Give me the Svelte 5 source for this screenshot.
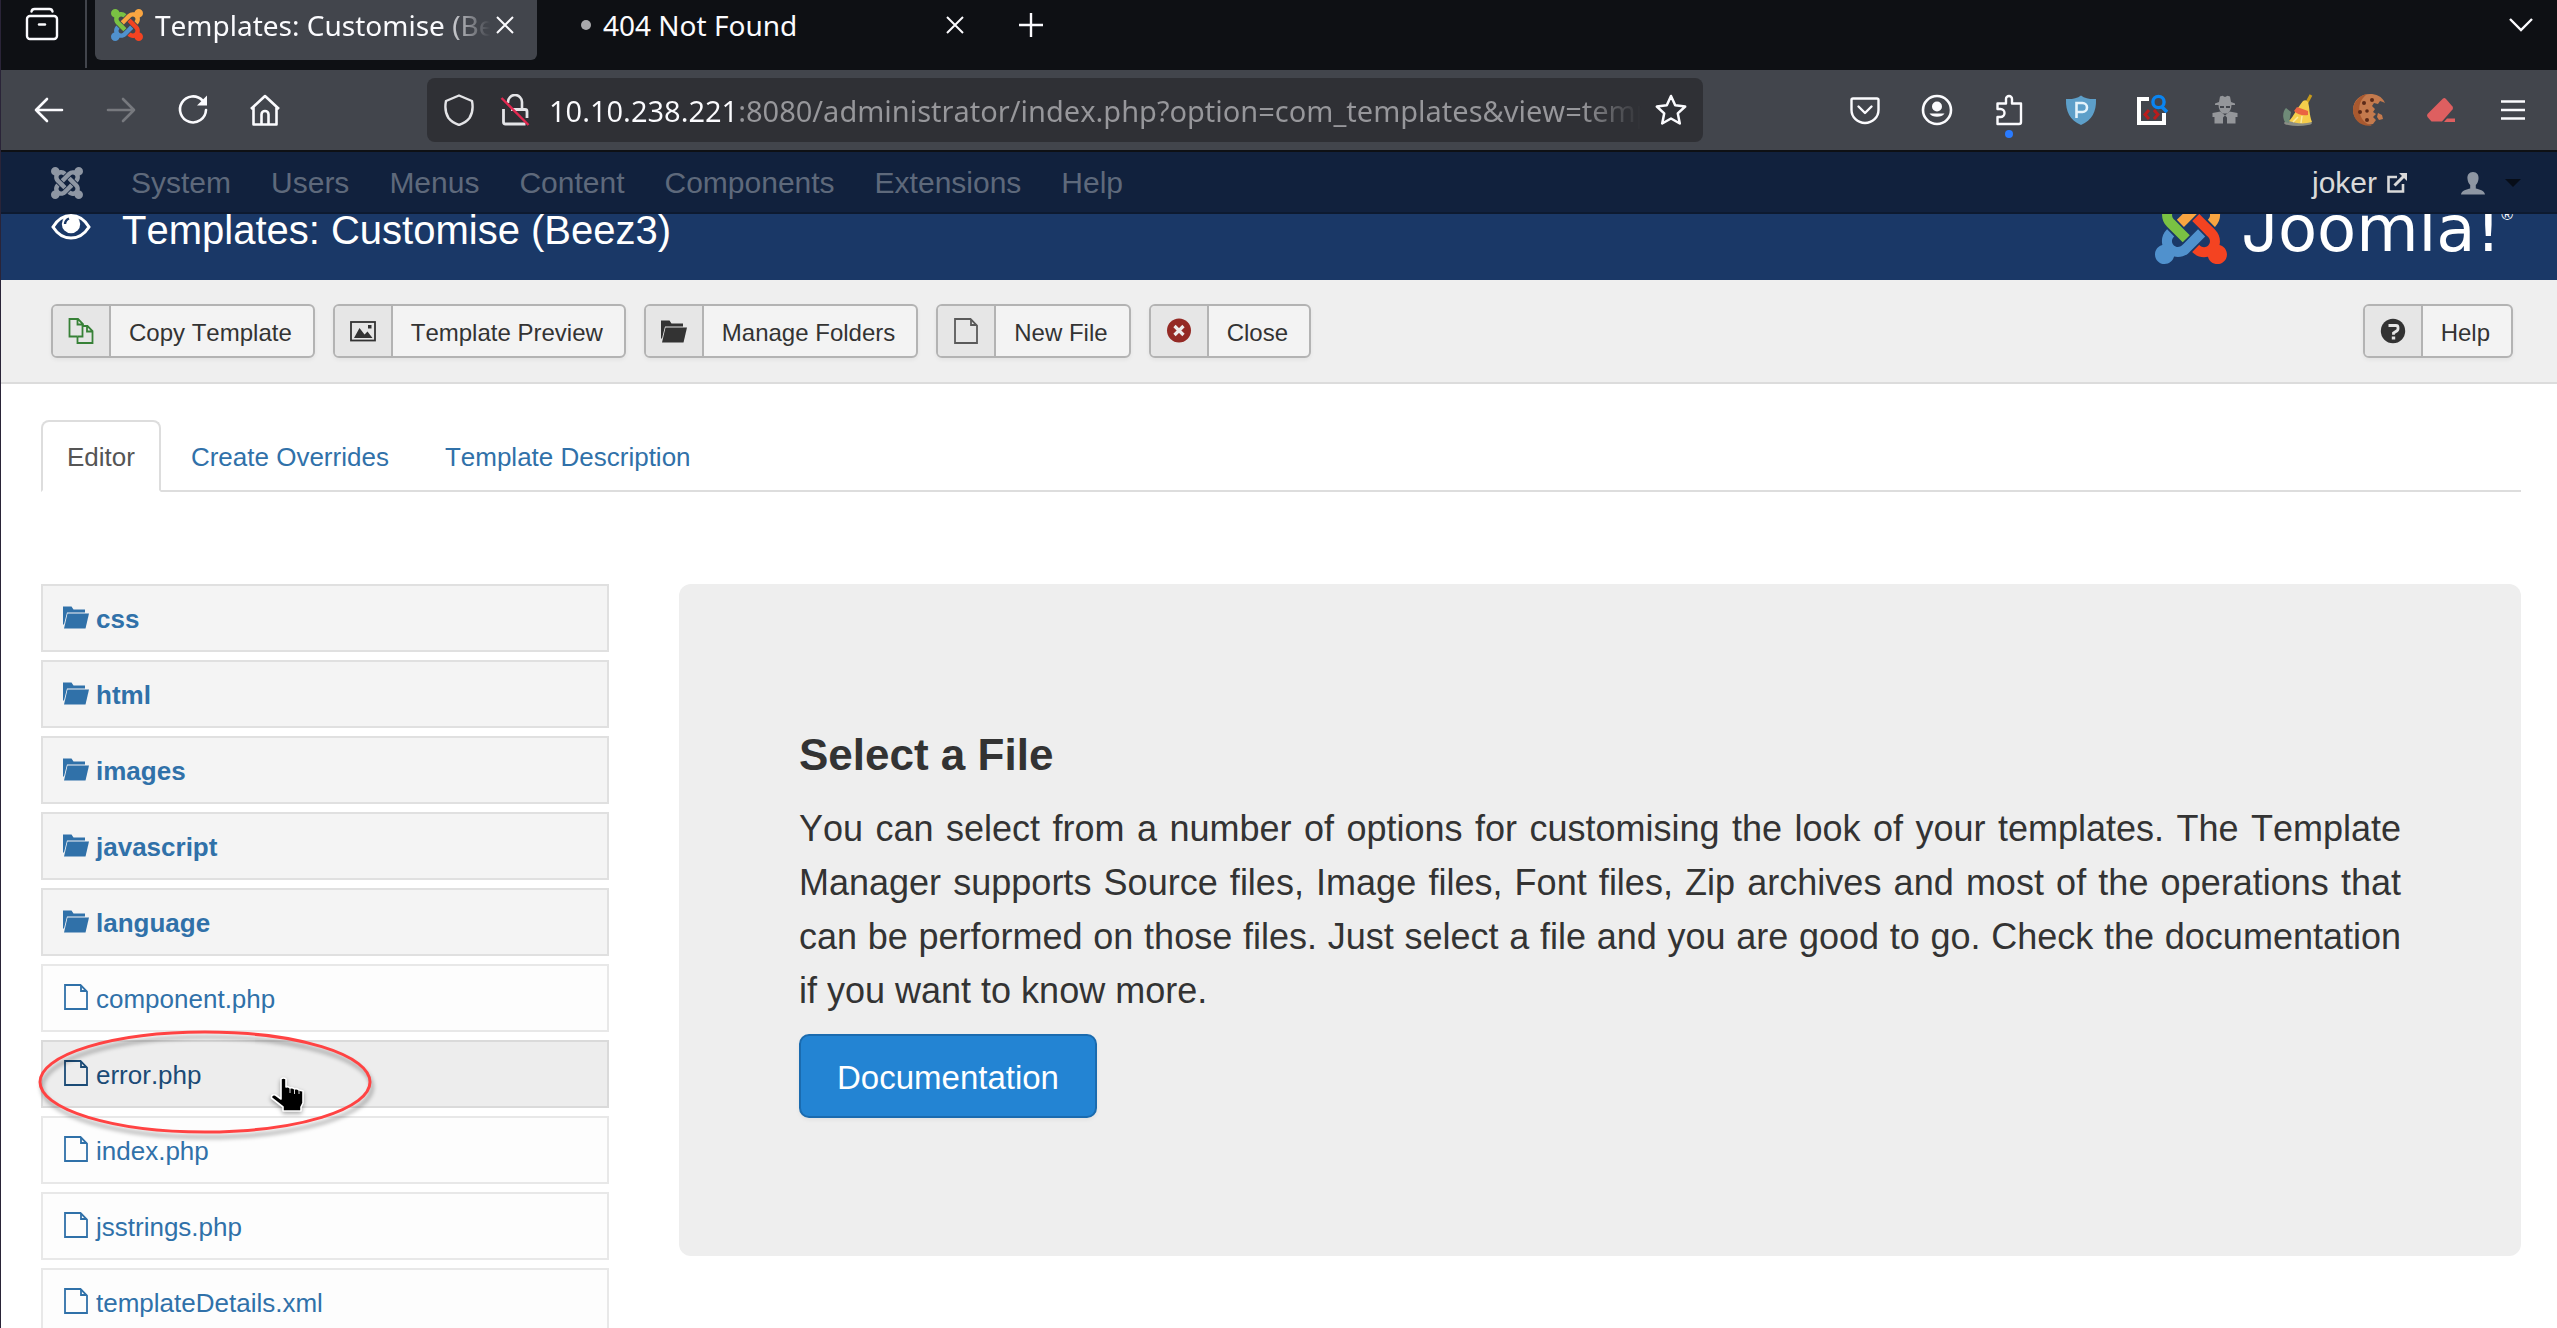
<script>
  const menus = ['System', 'Users', 'Menus', 'Content', 'Components', 'Extensions', 'Help'];
  const actions = [
    { icon: 'copy', label: 'Copy Template' },
    { icon: 'image', label: 'Template Preview' },
    { icon: 'folder', label: 'Manage Folders' },
    { icon: 'newfile', label: 'New File' },
    { icon: 'cancel', label: 'Close' }
  ];
  const tabs = ['Editor', 'Create Overrides', 'Template Description'];
  const folders = ['css', 'html', 'images', 'javascript', 'language'];
  const files = ['component.php', 'error.php', 'index.php', 'jsstrings.php', 'templateDetails.xml'];
  const extensions = ['pocket', 'account', 'puzzle', 'pshield', 'inspect', 'spy', 'broom', 'cookie', 'eraser', 'menu'];
  let activeTab = $state('Editor');
  let address = $state('10.10.238.221:8080/administrator/index.php?option=com_templates&view=template&id=503');

  const ribbon =
    'M16.719 14.759L14.22 17.26l-2.37 2.37-.462.466c-1.368 1.365-3.297 1.83-5.047 1.397-.327 1.424-1.604 2.49-3.13 2.49C1.438 23.983 0 22.547 0 20.772c0-1.518 1.055-2.789 2.469-3.123-.446-1.76.016-3.705 1.396-5.08l.179-.18 2.37 2.37-.184.181c-.769.779-.769 2.024 0 2.789.771.78 2.022.78 2.787.015l.465-.465 2.367-2.371 2.502-2.506 2.368 2.357z';
</script>

{#snippet joomla(colours)}
  {#each colours as colour, i}
    <path d={ribbon} fill={colour} transform={`rotate(${-90 * i} 12 12)`} />
  {/each}
{/snippet}

{#snippet icon(name)}
  {#if name === 'pocket'}
    <svg class="i32" viewBox="0 0 32 32" fill="none" stroke="#fbfbfe" stroke-width="2.4" stroke-linecap="round" stroke-linejoin="round"><path d="M4 4.500h24a1.500 1.500 0 0 1 1.500 1.500v10a13.500 13 0 0 1-27 0V6A1.500 1.500 0 0 1 4 4.500z" /><path d="M9.500 12.500l6.500 6.500 6.500-6.500" /></svg>
  {:else if name === 'account'}
    <svg class="i32" viewBox="0 0 32 32"><circle cx="16" cy="16" r="14" fill="none" stroke="#fbfbfe" stroke-width="2.6" /><circle cx="16" cy="12.500" r="5" fill="#fbfbfe" /><path d="M8.500 19.500h15a8.500 6 0 0 1-15 0z" fill="#fbfbfe" /></svg>
  {:else if name === 'puzzle'}
    <svg class="i32" viewBox="0 0 32 32" fill="none" stroke="#fbfbfe" stroke-width="2.4" stroke-linejoin="round"><path d="M4.500 30V23h3a3.800 3.800 0 0 0 0-8h-3V9.500h8.500V5a3 3 0 0 1 6 0v4.500h9V28a2 2 0 0 1-2 2z" /></svg>
  {:else if name === 'pshield'}
    <svg class="i32" viewBox="0 0 32 32"><path d="M16 1.500c4 3 10 4 15 3.500.5 13-4 21-15 26C5 26 .5 18 1 5c5 .5 11-.5 15-3.500z" fill="#5d9fc9" /><path d="M11.500 24V9h6a4.500 4.500 0 0 1 0 9h-6" fill="none" stroke="#e4f3fb" stroke-width="2.6" /></svg>
  {:else if name === 'inspect'}
    <svg class="i34" viewBox="0 0 34 32" fill="none"><path d="M13 5H3v24h25V19" stroke="#fff" stroke-width="4" /><circle cx="22.500" cy="8" r="5.600" stroke="#0a84f0" stroke-width="3.400" /><path d="M26 13l5 5" stroke="#0a84f0" stroke-width="3.600" /><path d="M13 16l-4 4.500 4 4.500M18 16l4 4.500-4 4.500" stroke="#b91c1c" stroke-width="3" /></svg>
  {:else if name === 'spy'}
    <svg class="i32" viewBox="0 0 32 32" fill="#94969a"><path d="M11 2.500l2.500-.8L16 3l2.500-1.300 2.500.8 1 5.500 4 1.500v1.500h-3.500c0 4-2 7-4 8.500h-5c-2-1.500-4-4.500-4-8.500H6V9.500L10 8z" /><path d="M3.500 19l8-1.500 4.500 4 4.500-4 8 1.500v4h-2v6.500H18V23.500l-2-2-2 2v6H5.500V23h-2z" /><path d="M11 12h4v2h-4zM17 12h4v2h-4z" fill="#42454c" /></svg>
  {:else if name === 'broom'}
    <svg class="i32" viewBox="0 0 32 32"><ellipse cx="17" cy="29" rx="14" ry="3" fill="#8b8d84" /><path d="M4 28c-3-5-2-11 1-14l5 4-2 11z" fill="#6f8b78" /><path d="M30 1l-6 11" stroke="#c79a1c" stroke-width="3" /><path d="M22 7q3-2 5 1c2 7 1 12 4 20-7 2-15 2-23-1 5-5 8-13 14-20z" fill="#f5cd4b" /><path d="M12 28l5-5m3 6l1-7" stroke="#fbe9a0" stroke-width="1.500" fill="none" /><path d="M16 13l11 4v4c-5 1-10 0-14-4z" fill="#ea6442" /></svg>
  {:else if name === 'cookie'}
    <svg class="i34" viewBox="0 0 34 32"><path d="M31 8l-3-1-2 3-4-1-2 3 3 3-2 3 3 2-3 3 3 3-3 4C11 33 1 26 1 16S9 0 18 0c6 0 12 2 15 9z" fill="#c47a4d" /><path d="M1 16C1 8 8 1 15 0 8 6 6 12 8 20c2 7 6 10 12 11.500C9 33 1 26 1 16z" fill="#a9592f" /><circle cx="12" cy="9" r="2" fill="#5b2a18" /><circle cx="20" cy="6" r="2" fill="#5b2a18" /><circle cx="8" cy="18" r="2" fill="#5b2a18" /><circle cx="15" cy="17" r="1.800" fill="#5b2a18" /><circle cx="15" cy="26" r="2" fill="#5b2a18" /><path d="M26 19l4 2 1 4-4 1-2-3z" fill="#c47a4d" /></svg>
  {:else if name === 'eraser'}
    <svg class="i32" viewBox="0 0 32 32"><path d="M18 4.500q1.500-1 3 .5l6.500 7.500q1 1.500 0 3L17 27.500H6.500L2.500 23q-1-1.500 0-3z" fill="#de5f60" /><path d="M22 24.500h8v3.500H19z" fill="#de5f60" /></svg>
  {:else if name === 'menu'}
    <svg class="i32" viewBox="0 0 32 32" stroke="#fbfbfe" stroke-width="2.400"><path d="M4 7.500h24M4 16h24M4 24.500h24" /></svg>
  {:else if name === 'copy'}
    <svg class="i26" viewBox="0 0 26 26" fill="none" stroke="#378137" stroke-width="1.800"><path d="M9.500 18.500H1.500V1h8.500l5 5v2.500M9.500 1.500v5h5" /><path d="M9.500 18.500V25H24.500V13l-5-5H14.500v10.500h-5M19 8.500v5h5" /></svg>
  {:else if name === 'image'}
    <svg class="i26" viewBox="0 0 26 26"><rect x="1" y="4" width="24" height="18.500" fill="none" stroke="#333" stroke-width="1.800" /><path d="M4 20l5.500-10 5 6.500 3-3 5 6.500zM18 7h3.500v3.500H18z" fill="#333" /></svg>
  {:else if name === 'folder'}
    <svg class="i26" viewBox="0 0 26 26" fill="currentColor"><path d="M0 2.500h8.500l2 3H22v3H4L1 20.500H0z" /><path d="M4.500 9.500H26l-3.500 15H1z" /></svg>
  {:else if name === 'file' || name === 'newfile'}
    <svg class="i26" viewBox="0 0 26 26" fill="none" stroke={name === 'file' ? 'currentColor' : '#5a5a5a'} stroke-width="1.800"><path d="M2 1h15.500L24 7.500V25H2z" /><path d="M18 1.500v5.500h5.500" /></svg>
  {:else if name === 'cancel'}
    <svg class="i26" viewBox="0 0 26 26"><circle cx="13" cy="12.500" r="12" fill="#942a25" /><path d="M8.500 8l9 9m0-9l-9 9" stroke="#ececec" stroke-width="3.200" /></svg>
  {:else if name === 'question'}
    <svg class="i26" viewBox="0 0 26 26"><circle cx="13" cy="13" r="12.200" fill="#333" /><path d="M8.500 7.500h7.500q2 0 2 2v1.500q0 1-1 1.800l-3.500 2.200v1.800" fill="none" stroke="#e6e6e6" stroke-width="2.800" /><rect x="11.800" y="18.500" width="3.400" height="3" fill="#e6e6e6" /></svg>
  {/if}
{/snippet}

<div class="window">
  <header>
    <div class="tabstrip">
      <button class="recent" aria-label="Recent browsing">
        <svg class="i34" viewBox="0 0 34 34" fill="none" stroke="#fbfbfe" stroke-width="2.400" stroke-linecap="round"><path d="M6.500 4.500Q7 2 9.500 2h15Q27 2 27.500 4.500" /><rect x="2" y="9" width="30" height="23" rx="3" /><path d="M14 17.500h6" /></svg>
      </button>
      <div class="browsertab current">
        <svg class="i32" viewBox="0 0 24 24">{@render joomla(['#5091cd', '#f44321', '#f9a541', '#7ac143'])}</svg>
        <span class="tabtitle">Templates: Customise (Beez3)</span>
        <button class="x" aria-label="Close tab"><svg viewBox="0 0 18 18" stroke="#fbfbfe" stroke-width="2"><path d="M1 1l16 16M17 1L1 17" /></svg></button>
      </div>
      <div class="browsertab loading">
        <span class="dot"></span>
        <span class="tabtitle">404 Not Found</span>
        <button class="x" aria-label="Close tab"><svg viewBox="0 0 18 18" stroke="#fbfbfe" stroke-width="2"><path d="M1 1l16 16M17 1L1 17" /></svg></button>
      </div>
      <button class="chrome plus" aria-label="New tab"><svg viewBox="0 0 24 24" stroke="#fbfbfe" stroke-width="2.400"><path d="M12 0v24M0 12h24" /></svg></button>
      <button class="chrome alltabs" aria-label="List all tabs"><svg viewBox="0 0 24 24" fill="none" stroke="#fbfbfe" stroke-width="2.400"><path d="M1 6l11 11L23 6" /></svg></button>
    </div>

    <div class="toolbar">
      <button class="chrome" aria-label="Back"><svg class="i32" viewBox="0 0 32 32" fill="none" stroke="#fbfbfe" stroke-width="2.600" stroke-linecap="round" stroke-linejoin="round"><path d="M29 16H3M14 5L3 16l11 11" /></svg></button>
      <button class="chrome" aria-label="Forward"><svg class="i32" viewBox="0 0 32 32" fill="none" stroke="#77797e" stroke-width="2.600" stroke-linecap="round" stroke-linejoin="round"><path d="M3 16h26M18 5l11 11-11 11" /></svg></button>
      <button class="chrome" aria-label="Reload"><svg class="i32" viewBox="0 0 32 32"><path d="M25.500 6.500A13 13 0 1 0 29 16" fill="none" stroke="#fbfbfe" stroke-width="2.600" stroke-linecap="round" /><path d="M30 1.500v10H20z" fill="#fbfbfe" /></svg></button>
      <button class="chrome" aria-label="Home"><svg class="i32" viewBox="0 0 32 32" fill="none" stroke="#fbfbfe" stroke-width="2.600" stroke-linejoin="round"><path d="M2 15L16 2l14 13M4.500 13v17.500h23V13M12.500 30V20.500a3.500 3.500 0 0 1 7 0V30" /></svg></button>
      <div class="urlbar">
        <svg class="i32" viewBox="0 0 32 32" fill="none" stroke="#e4e4e7" stroke-width="2.400" stroke-linejoin="round"><path d="M16 1.500l13 5.500q2 10-2.500 17Q23 28.500 16 31 9 28.500 5.500 24 1 17 3 7z" /></svg>
        <svg class="i32 lock" viewBox="0 0 32 32" fill="none"><path d="M9 9V8a7 7 0 0 1 14 0v6" stroke="#e4e4e7" stroke-width="2.600" /><path d="M4.500 15v13a2 2 0 0 0 2 2h20M12 15.500h14a2 2 0 0 1 2 2V24" stroke="#e4e4e7" stroke-width="2.800" /><path d="M2.500 4l27 27" stroke="#e22850" stroke-width="2.400" /></svg>
        <input class="address" aria-label="Address" bind:value={address} />
        <button class="star" aria-label="Bookmark"><svg class="i32" viewBox="0 0 32 32" fill="none" stroke="#fbfbfe" stroke-width="2.500" stroke-linejoin="round"><path d="M16 2l4.200 9.300 10 1.200-7.400 6.900 2 10.100L16 24.500l-8.800 5 2-10.100-7.400-6.900 10-1.200z" /></svg></button>
      </div>
      {#each extensions as name}
        <button class="chrome" class:notify={name === 'puzzle'} aria-label={name}>{@render icon(name)}</button>
      {/each}
    </div>
  </header>

  <nav class="admin">
    <a class="brand" href="#home" aria-label="Joomla"><svg class="i32" viewBox="0 0 24 24">{@render joomla(['#8e96a3', '#8e96a3', '#8e96a3', '#8e96a3'])}</svg></a>
    <ul>
      {#each menus as item}
        <li><a href="#{item}">{item}</a></li>
      {/each}
    </ul>
    <a class="site" href="#site">joker
      <svg viewBox="0 0 20 20" fill="none" stroke="#d9d9d9"><path d="M10 4H1.500v14.500H16V11" stroke-width="2.600" /><path d="M7.500 12.500L17 3" stroke-width="3" /><path d="M12 0h8v8z" fill="#d9d9d9" stroke="none" /></svg>
    </a>
    <button class="user" aria-label="User menu">
      <svg class="person" viewBox="0 0 24 23" fill="#8e96a3"><path d="M12 0c4 0 6 3 5.500 7-.3 3-1.500 5-2.700 6v3.500c3 .8 9 2 9.200 6H0c.2-4 6.200-5.200 9.200-6V13C8 12 6.800 10 6.500 7 6 3 8 0 12 0z" /></svg>
      <svg class="caret" viewBox="0 0 16 8" fill="#070d18"><path d="M0 0h16l-8 8z" /></svg>
    </button>
  </nav>

  <div class="titlebar">
    <h1>
      <svg class="eye" viewBox="0 0 40 32" fill="none"><path d="M2 13Q9 1.500 20 1.500T38 13Q31 24 20 24T2 13z" stroke="#fff" stroke-width="3" /><circle cx="20" cy="10" r="9.200" fill="#fff" /><path d="M14 10a6.500 6.500 0 0 1 4-5.500" stroke="#1a3867" stroke-width="2.400" /></svg>
      Templates: Customise (Beez3)
    </h1>
    <div class="logo">
      <svg viewBox="0 7.300 24 22"><g>{@render joomla(['#5091cd', '#f44321', '#f9a541', '#7ac143'])}</g></svg>
      <span>Joomla!</span><sup>®</sup>
    </div>
  </div>

  <div class="actions">
    {#each actions as action}
      <button class="action"><span class="glyph">{@render icon(action.icon)}</span><span class="label">{action.label}</span></button>
    {/each}
    <button class="action help"><span class="glyph">{@render icon('question')}</span><span class="label">Help</span></button>
  </div>

  <main>
    <div class="tabs" role="tablist">
      {#each tabs as tab}
        <button role="tab" aria-selected={tab === activeTab} class:active={tab === activeTab} onclick={() => (activeTab = tab)}>{tab}</button>
      {/each}
    </div>

    <div class="columns">
      <ul class="tree">
        {#each folders as name}
          <li class="dir"><a href="#{name}">{@render icon('folder')}{name}</a></li>
        {/each}
        {#each files as name}
          <li class:hovered={name === 'error.php'}>
            <a href="#{name}">{@render icon('file')}{name}</a>
            {#if name === 'error.php'}
              <svg class="ring" viewBox="0 0 334 104" fill="none"><ellipse cx="167" cy="52" rx="165" ry="50" stroke="#ff4343" stroke-width="3" /></svg>
              <svg class="pointer" viewBox="0 0 34 38"><path d="M11 3q2.500-2 5 0v8q2-1 4 1 2.500-1 4.500 1 2.500-1 4.500 1l4 1v12l-2 4v4H13v-4L1.500 22q-.5-4 4-3l5.500 4z" fill="#000" stroke="#fff" stroke-width="1.600" stroke-linejoin="round" /><path d="M20 12v5M24.500 13v5M29 14v4" stroke="#ddd" stroke-width="1" /></svg>
            {/if}
          </li>
        {/each}
      </ul>

      <section class="hero">
        <h2>Select a File</h2>
        <p>You can select from a number of options for customising the look of your templates. The Template Manager supports Source files, Image files, Font files, Zip archives and most of the operations that can be performed on those files. Just select a file and you are good to go. Check the documentation if you want to know more.</p>
        <a class="docs" href="#docs">Documentation</a>
      </section>
    </div>
  </main>
</div>

<style>
  :global(body) { background: #fff; }
  .window { box-sizing: border-box; height: 100vh; overflow: hidden; border-left: 1px solid #2a2438; font-family: "Liberation Sans", Arial, sans-serif; font-kerning: none; color: #333; background: #fff; }
  button { font: inherit; font-kerning: inherit; color: inherit; background: none; border: 0; padding: 0; margin: 0; }
  a { text-decoration: none; color: #3071a9; }
  ul { list-style: none; margin: 0; padding: 0; }
  svg { display: block; flex: none; }
  .i26 { width: 26px; height: 26px; }
  .i32 { width: 32px; height: 32px; }
  .i34 { width: 34px; height: 34px; }

  header { font-family: "Noto Sans", sans-serif; font-size: 28px; color: #fbfbfe; border-bottom: 2px solid #0e1014; }
  .tabstrip { display: flex; gap: 8px; height: 70px; background: #0e1014; }
  .recent { box-sizing: border-box; width: 86px; height: 68px; padding: 0 0 20px 24px; border-right: 2px solid #42454c; }
  .browsertab { box-sizing: border-box; display: flex; align-items: center; width: 442px; height: 60px; padding: 0 23px 10px 16px; gap: 12px; border-radius: 0 0 6px 6px; }
  .current { background: #42454c; }
  .loading { padding-left: 36px; }
  .dot { flex: none; width: 10px; height: 10px; border-radius: 50%; background: #a9a9ac; }
  .tabtitle { flex: 1; overflow: hidden; white-space: nowrap; line-height: 44px; }
  .current .tabtitle { mask-image: linear-gradient(90deg, #000 85%, transparent); }
  .x svg { width: 18px; height: 18px; }
  .current .x { margin-left: -6px; }
  .chrome { display: flex; align-items: center; justify-content: center; width: 72px; height: 80px; flex: none; }
  .plus, .alltabs { height: 50px; }
  .plus svg, .alltabs svg { width: 24px; height: 24px; }
  .alltabs { margin-left: auto; }

  .toolbar { display: flex; align-items: center; height: 80px; padding: 0 8px 0 12px; background: #42454c; }
  .urlbar { flex: 1; min-width: 0; display: flex; align-items: center; box-sizing: border-box; height: 64px; margin: 0 126px; padding: 0 16px; border-radius: 8px; background: #2f3035; }
  .lock { margin: 0 18px 0 24px; }
  .address { flex: 1; min-width: 0; height: 44px; padding: 0; border: 0; outline: 0; font: inherit; font-size: 29px; color: transparent; background: linear-gradient(90deg, #fbfbfe 190px, #97979b 190px, #97979b calc(100% - 60px), transparent); background-clip: text; -webkit-background-clip: text; }
  .star { margin-left: 14px; }
  .notify { position: relative; }
  .notify::after { content: ""; position: absolute; left: 32px; bottom: 12px; width: 8px; height: 8px; border-radius: 50%; background: #2a7bff; }

  .admin { display: flex; align-items: center; box-sizing: border-box; height: 62px; padding: 2px 36px 0 50px; border-bottom: 2px solid #0d1a30; background: #11213d; font-size: 30px; line-height: 60px; }
  .admin ul { display: flex; margin-left: 28px; }
  .admin li a { display: block; padding: 0 20px; color: #5e697b; }
  .site { display: flex; align-items: center; gap: 10px; margin-left: auto; color: #d9d9d9; }
  .site svg { width: 20px; height: 20px; }
  .user { display: flex; align-items: center; gap: 20px; margin-left: 54px; }
  .person { width: 24px; height: 23px; }
  .caret { width: 16px; height: 8px; }

  .titlebar { display: flex; justify-content: space-between; align-items: flex-start; height: 66px; padding: 0 44px 0 50px; overflow: hidden; background: #1a3867; color: #fff; }
  h1 { display: flex; gap: 31px; margin: 0; font-size: 40px; font-weight: 400; line-height: 32px; }
  .eye { width: 40px; height: 32px; }
  .logo { display: flex; align-items: flex-start; }
  .logo svg { width: 72px; height: 66px; margin-right: 14px; }
  .logo span { font-family: "DejaVu Sans", sans-serif; font-size: 64px; line-height: 28px; }
  .logo span::first-letter { font-family: Inter, sans-serif; }
  .logo sup { font-size: 16px; line-height: 1px; }

  .actions { display: flex; gap: 18px; padding: 24px 44px 24px 50px; border-bottom: 2px solid #dcdcdc; background: #efefef; }
  .action { display: flex; box-sizing: border-box; height: 54px; border: 2px solid #b3b3b3; border-radius: 6px; background: #f3f3f3; font-size: 24px; line-height: 50px; box-shadow: 0 2px 4px rgb(0 0 0 / 5%); overflow: hidden; }
  .glyph { display: flex; align-items: center; justify-content: center; width: 56px; height: 50px; border-right: 2px solid #b3b3b3; background: #e6e6e6; }
  .label { padding: 2px 21px 0 18px; }
  .help { margin-left: auto; }

  main { padding: 36px 36px 0 40px; }
  .tabs { display: flex; gap: 4px; border-bottom: 2px solid #ddd; }
  .tabs button { margin-bottom: -2px; padding: 2px 24px 0; border: 2px solid transparent; border-radius: 8px 8px 0 0; font-size: 26px; line-height: 66px; color: #3071a9; }
  .tabs .active { border-color: #ddd; border-bottom-color: #fff; background: #fff; color: #555; }
  .columns { display: grid; grid-template-columns: 568px 1fr; gap: 70px; align-items: start; margin-top: 92px; }
  .tree { display: grid; gap: 8px; }
  .tree li { position: relative; border: 2px solid #e8e8e8; background: #fdfdfd; font-size: 26px; line-height: 62px; }
  .tree a { display: flex; align-items: center; gap: 7px; padding: 2px 0 0 20px; color: #3071a9; }
  .tree a :global(svg) { margin-bottom: 4px; }
  .tree .dir { border-color: #e0e0e0; background: #f4f4f4; font-weight: 700; }
  .tree .hovered { z-index: 1; border-color: #dadada; background: #ededed; }
  .tree .hovered a { color: #1b4b76; }
  .ring { position: absolute; left: -5px; top: -12px; width: 334px; height: 104px; overflow: visible; filter: drop-shadow(2px 5px 2px rgb(0 0 0 / 35%)); }
  .pointer { position: absolute; left: 227px; top: 34px; width: 34px; height: 38px; filter: drop-shadow(0 2px 2px rgb(0 0 0 / 35%)); }

  .hero { padding: 132px 120px 138px; border-radius: 12px; background: #eee; }
  h2 { margin: 0 0 8px; font-size: 44px; line-height: 78px; }
  p { margin: 0 0 16px; font-size: 36px; line-height: 54px; text-align: justify; }
  .docs { display: block; width: fit-content; padding: 4px 36px 0; border: 2px solid #1a6baf; border-radius: 10px; background: #2384d3; color: #fff; font-size: 33px; line-height: 76px; box-shadow: 0 2px 4px rgb(0 0 0 / 5%); }
</style>
